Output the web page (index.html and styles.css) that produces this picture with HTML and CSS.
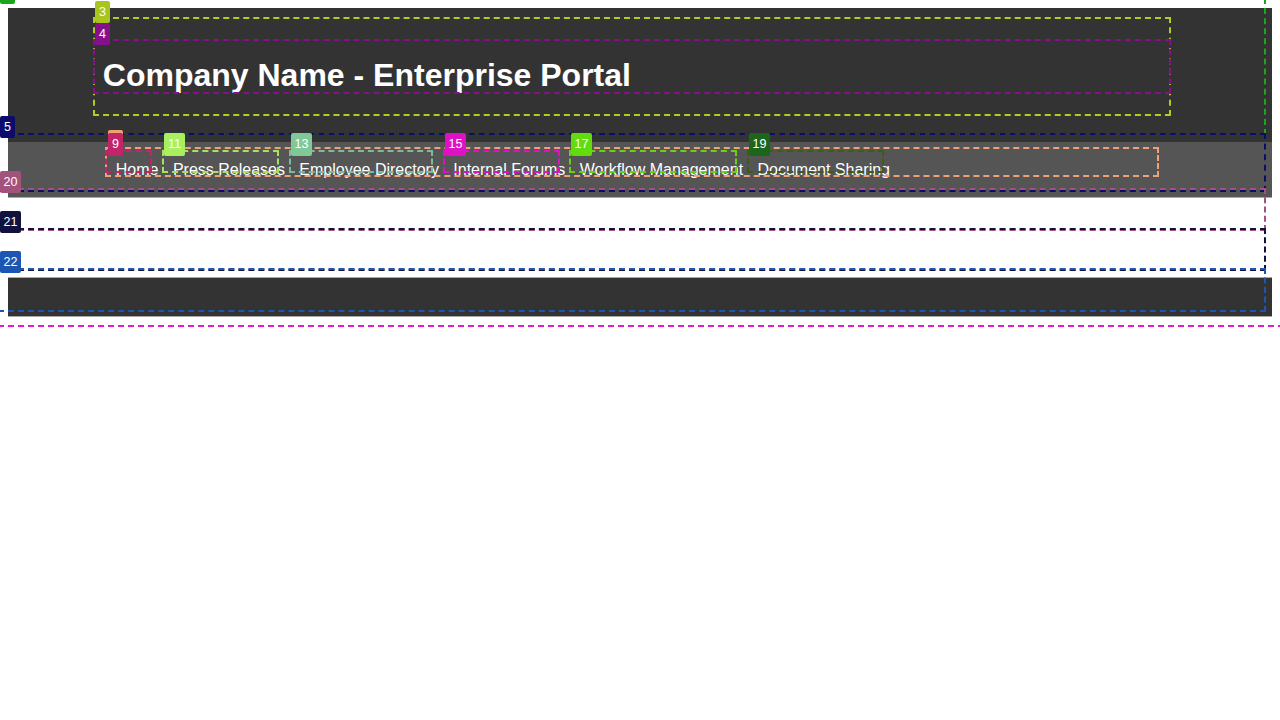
FILE: index.html
```html
<!DOCTYPE html>
<html lang="en">
<head>
<meta charset="utf-8">
<title>Company Name - Enterprise Portal</title>
<link rel="stylesheet" href="styles.css">
</head>
<body>
<header class="site-header">
  <div class="container">
    <h1 class="title">Company Name - Enterprise Portal</h1>
  </div>
</header>
<nav class="site-nav">
  <div class="container">
    <ul class="nav-list">
      <li><a href="#">Home</a></li>
      <li><a href="#">Press Releases</a></li>
      <li><a href="#">Employee Directory</a></li>
      <li><a href="#">Internal Forums</a></li>
      <li><a href="#">Workflow Management</a></li>
      <li><a href="#">Document Sharing</a></li>
    </ul>
  </div>
</nav>
<main class="site-main"></main>
<footer class="site-footer"></footer>

<div class="marks" aria-hidden="true">
  <div class="box b2"></div>
  <div class="box b1"></div>
  <div class="box b5"></div>
  <div class="box b20"></div>
  <div class="box b21"></div>
  <div class="box b22"></div>
  <div class="box b3"></div>
  <div class="box b4"></div>
  <div class="box b7"></div>
  <div class="box b9"></div>
  <div class="box b11"></div>
  <div class="box b13"></div>
  <div class="box b15"></div>
  <div class="box b17"></div>
  <div class="box b19"></div>

  <span class="tag t1"></span>
  <span class="tag t3">3</span>
  <span class="tag t4">4</span>
  <span class="tag t5">5</span>
  <span class="tag t7"></span>
  <span class="tag t9">9</span>
  <span class="tag t11">11</span>
  <span class="tag t13">13</span>
  <span class="tag t15">15</span>
  <span class="tag t17">17</span>
  <span class="tag t19">19</span>
  <span class="tag t20">20</span>
  <span class="tag t21">21</span>
  <span class="tag t22">22</span>
</div>
</body>
</html>
```

FILE: styles.css
```css
html, body {
  background: #fff;
}
body {
  margin: 8px;
  font-family: "Liberation Sans", Arial, sans-serif;
}
.container {
  width: 85%;
  margin: 0 auto;
}

/* header */
.site-header {
  background: #333;
  color: #fff;
  padding: 28px 0 27px;
}
.title {
  margin: 21px 0;
  font-size: 32px;
  font-weight: bold;
  line-height: 37px;
}

/* navigation */
.site-nav {
  background: #555;
  padding: 18px 0 18px;
  border-bottom: 1px solid #a9a9a9;
}
.nav-list {
  list-style: none;
  margin: 0;
  padding: 0 0 0 13px;
  display: flex;
  gap: 14.4px;
  line-height: 19px;
  font-size: 16px;
}
.nav-list a {
  color: #fff;
  text-decoration: none;
}

/* main + footer */
.site-main {
  height: 79px;
  background: #fff;
}
.site-footer {
  height: 38px;
  background: #333;
  border-top: 1px solid #a9a9a9;
  border-bottom: 1px solid #a9a9a9;
}

/* inspection overlay */
.marks {
  position: absolute;
  left: 0;
  top: 0;
  width: 1280px;
  height: 720px;
  overflow: hidden;
  pointer-events: none;
}
.box {
  position: absolute;
  box-sizing: border-box;
  border: 2px dashed;
}
.b2  { left: -2px; top: -2px; width: 1286px; height: 329px; border-color: #e01ad8; }
.b1  { left: -2px; top: -2px; width: 1268px; height: 137px; border-color: #1aa51a; }
.b5  { left: -2px; top: 133px; width: 1268px; height: 59px; border-color: #0c0c6c; }
.b20 { left: -2px; top: 188px; width: 1268px; height: 43px; border-color: #a3527c; }
.b21 { left: -2px; top: 228px; width: 1268px; height: 43px; border-color: #12123e; }
.b22 { left: -2px; top: 268px; width: 1268px; height: 44px; border-color: #1c56b2; }
.b3  { left: 93px; top: 17px; width: 1078px; height: 99px; border-color: #b4cc20; }
.b4  { left: 93px; top: 39px; width: 1078px; height: 55px; border-color: #85108a; }
.b7  { left: 105px; top: 147px; width: 1054px; height: 30px; border-color: #f0a078; }
.b9  { left: 105px; top: 150px; width: 47px; height: 23px; border-color: #c2246a; }
.b11 { left: 162px; top: 150px; width: 117px; height: 23px; border-color: #a2e45e; }
.b13 { left: 289px; top: 150px; width: 144px; height: 23px; border-color: #78bca0; }
.b15 { left: 443px; top: 150px; width: 117px; height: 23px; border-color: #de12c4; }
.b17 { left: 569px; top: 150px; width: 168px; height: 23px; border-color: #62d414; }
.b19 { left: 747px; top: 150px; width: 137px; height: 23px; border-color: #3a5e12; }

.tag {
  position: absolute;
  height: 22px;
  min-width: 15px;
  padding: 0 3px;
  box-sizing: border-box;
  border-radius: 2px;
  color: #fff;
  font-family: "Liberation Sans", Arial, sans-serif;
  font-size: 12.5px;
  line-height: 22px;
  text-align: center;
}
.t1  { left: 0; top: -18px; background: #1aa51a; }
.t3  { left: 95px; top: 1px; background: #a8c41e; }
.t4  { left: 95px; top: 23px; background: #85108a; }
.t5  { left: 0; top: 116px; background: #0c0c6c; }
.t7  { left: 108px; top: 130px; background: #f0a070; }
.t9  { left: 108px; top: 133px; height: 23px; background: #c2246a; }
.t11 { left: 164px; top: 133px; height: 23px; min-width: 21px; background: #a8f060; }
.t13 { left: 291px; top: 133px; height: 23px; min-width: 21px; background: #80c898; }
.t15 { left: 445px; top: 133px; height: 23px; min-width: 21px; background: #de12c4; }
.t17 { left: 571px; top: 133px; height: 23px; min-width: 21px; background: #62dc0e; }
.t19 { left: 749px; top: 133px; height: 23px; min-width: 21px; background: #1c661c; }
.t20 { left: 0; top: 171px; min-width: 21px; background: #a3527c; }
.t21 { left: 0; top: 211px; min-width: 21px; background: #12123e; }
.t22 { left: 0; top: 251px; min-width: 21px; background: #1c56b2; }
```
